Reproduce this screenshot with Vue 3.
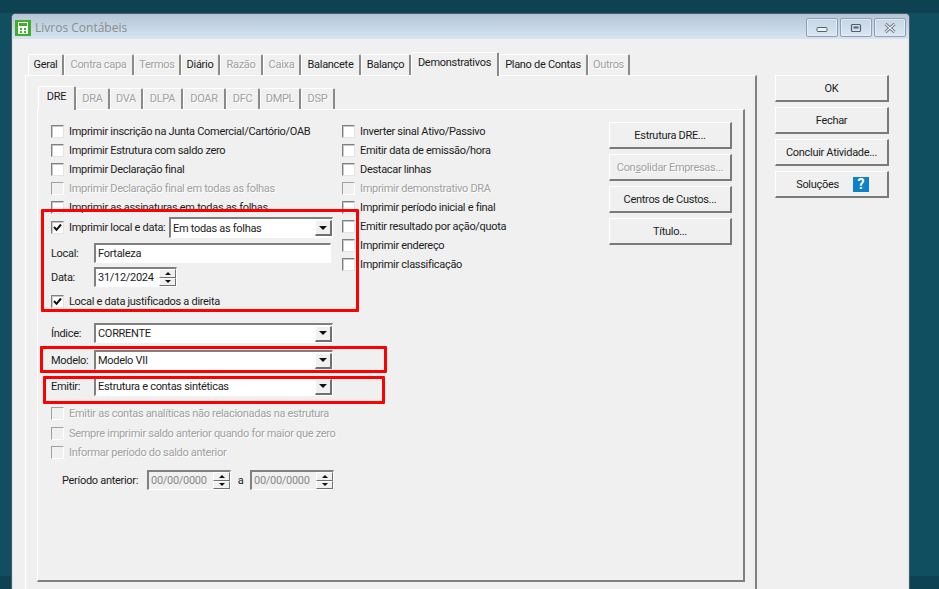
<script setup>
const outerTabs = [
  { t: 'Geral', w: 36 }, { t: 'Contra capa', w: 70, off: true }, { t: 'Termos', w: 47, off: true },
  { t: 'Diário', w: 39 }, { t: 'Razão', w: 43, off: true }, { t: 'Caixa', w: 38, off: true },
  { t: 'Balancete', w: 60 }, { t: 'Balanço', w: 50 }, { t: 'Demonstrativos', w: 88, on: true },
  { t: 'Plano de Contas', w: 89 }, { t: 'Outros', w: 42, off: true }
]
const innerTabs = [
  { t: 'DRE', w: 38, on: true }, { t: 'DRA', w: 34, off: true }, { t: 'DVA', w: 33, off: true },
  { t: 'DLPA', w: 40, off: true }, { t: 'DOAR', w: 43, off: true }, { t: 'DFC', w: 34, off: true },
  { t: 'DMPL', w: 41, off: true }, { t: 'DSP', w: 34, off: true }
]
const leftChecks = [
  { t: 'Imprimir inscrição na Junta Comercial/Cartório/OAB' },
  { t: 'Imprimir Estrutura com saldo zero' },
  { t: 'Imprimir Declaração final' },
  { t: 'Imprimir Declaração final em todas as folhas', off: true },
  { t: 'Imprimir as assinaturas em todas as folhas' }
]
const rightChecks = [
  { t: 'Inverter sinal Ativo/Passivo' },
  { t: 'Emitir data de emissão/hora' },
  { t: 'Destacar linhas' },
  { t: 'Imprimir demonstrativo DRA', off: true },
  { t: 'Imprimir período inicial e final' },
  { t: 'Emitir resultado por ação/quota' },
  { t: 'Imprimir endereço' },
  { t: 'Imprimir classificação' }
]
const bottomChecks = [
  'Emitir as contas analíticas não relacionadas na estrutura',
  'Sempre imprimir saldo anterior quando for maior que zero',
  'Informar período do saldo anterior'
]
</script>

<template>
  <div class="desk">
    <div class="win">
      <div class="titlebar">
        <svg class="appicon" width="16" height="16" viewBox="0 0 16 16">
          <rect width="16" height="16" fill="#3fae29" />
          <rect x="3" y="2" width="10" height="12" fill="#fff" />
          <rect x="4" y="3" width="8" height="3" fill="#3fae29" />
          <rect x="5" y="8" width="2" height="2" fill="#3fae29" />
          <rect x="9" y="8" width="2" height="2" fill="#3fae29" />
          <rect x="5" y="11" width="2" height="2" fill="#3fae29" />
          <rect x="9" y="11" width="2" height="2" fill="#3fae29" />
        </svg>
        <span class="title">Livros Contábeis</span>
        <div class="capbtns">
          <div class="capbtn">
            <svg width="12" height="8" viewBox="0 0 12 8"><rect x="1" y="3.5" width="10" height="4" rx="1" fill="#eef2f6" stroke="#56616c" /></svg>
          </div>
          <div class="capbtn">
            <svg width="12" height="10" viewBox="0 0 12 10"><rect x="1.5" y="1.5" width="9" height="7" rx="1" fill="none" stroke="#56616c" stroke-width="1.2" /><rect x="3.5" y="3.5" width="5" height="2" fill="#56616c" /></svg>
          </div>
          <div class="capbtn">
            <svg width="12" height="10" viewBox="0 0 12 10"><path d="M1.5 1 L10.5 9 M10.5 1 L1.5 9" stroke="#5a6570" stroke-width="3" fill="none" /><path d="M1.5 1 L10.5 9 M10.5 1 L1.5 9" stroke="#eef2f6" stroke-width="1.2" fill="none" /></svg>
          </div>
        </div>
      </div>

      <div class="client">
        <div class="main">
          <div class="tabs outer">
            <div v-for="tab in outerTabs" :key="tab.t" class="tab" :class="{ on: tab.on, off: tab.off }" :style="{ width: tab.w + 'px' }">{{ tab.t }}</div>
          </div>
          <div class="panel outerpanel">
            <div class="tabs inner">
              <div v-for="tab in innerTabs" :key="tab.t" class="tab" :class="{ on: tab.on, off: tab.off }" :style="{ width: tab.w + 'px' }">{{ tab.t }}</div>
            </div>
            <div class="panel innerpanel">
              <div class="form">
                <div class="col-left">
                  <div v-for="c in leftChecks" :key="c.t" class="check" :class="{ off: c.off }"><span class="box"></span>{{ c.t }}</div>
                  <div class="row local-combo">
                    <div class="check local-check"><span class="box"><svg width="9" height="9" viewBox="0 0 9 9"><path d="M1 4 L3.5 6.8 L8 1.5" fill="none" stroke="#111" stroke-width="2" /></svg></span>Imprimir local e data:</div>
                    <div class="combo combo-em"><span>Em todas as folhas</span><span class="arrow"><i></i></span></div>
                  </div>
                  <div class="row r-local"><label class="lbl">Local:</label><div class="input input-wide">Fortaleza</div></div>
                  <div class="row r-data"><label class="lbl">Data:</label>
                    <div class="input spin-date"><span>31/12/2024</span><span class="spin"><b><i class="up"></i></b><b><i class="down"></i></b></span></div>
                  </div>
                  <div class="check r-just"><span class="box"><svg width="9" height="9" viewBox="0 0 9 9"><path d="M1 4 L3.5 6.8 L8 1.5" fill="none" stroke="#111" stroke-width="2" /></svg></span>Local e data justificados a direita</div>
                  <div class="row r-indice"><label class="lbl">Índice:</label><div class="combo combo-wide"><span>CORRENTE</span><span class="arrow"><i></i></span></div></div>
                  <div class="row r-modelo"><label class="lbl">Modelo:</label><div class="combo combo-wide"><span>Modelo VII</span><span class="arrow"><i></i></span></div></div>
                  <div class="row r-emitir"><label class="lbl">Emitir:</label><div class="combo combo-wide"><span>Estrutura e contas sintéticas</span><span class="arrow"><i></i></span></div></div>
                  <div class="bottom-checks">
                    <div v-for="c in bottomChecks" :key="c" class="check off"><span class="box"></span>{{ c }}</div>
                  </div>
                  <div class="row r-periodo">
                    <label class="lbl-p">Período anterior:</label>
                    <div class="input spin-p"><span>00/00/0000</span><span class="spin"><b><i class="up"></i></b><b><i class="down"></i></b></span></div>
                    <span class="a">a</span>
                    <div class="input spin-p"><span>00/00/0000</span><span class="spin"><b><i class="up"></i></b><b><i class="down"></i></b></span></div>
                  </div>
                </div>
                <div class="col-right">
                  <div v-for="c in rightChecks" :key="c.t" class="check" :class="{ off: c.off }"><span class="box"></span>{{ c.t }}</div>
                </div>
                <div class="col-btns">
                  <div class="btn">Estrutura DRE...</div>
                  <div class="btn off"><span>Con<u>s</u>olidar Empresas...</span></div>
                  <div class="btn">Centros de Custos...</div>
                  <div class="btn">Título...</div>
                </div>
              </div>
            </div>
          </div>
        </div>
        <div class="side">
          <div class="btn">OK</div>
          <div class="btn">Fechar</div>
          <div class="btn">Concluir Atividade...</div>
          <div class="btn sol">Soluções
            <span class="help">?</span>
          </div>
        </div>
      </div>
    </div>
    <div class="mark m1"></div>
    <div class="mark m2"></div>
    <div class="mark m3"></div>
  </div>
</template>

<style>
html, body { margin: 0; padding: 0; background: #0f4f60; }
</style>

<style scoped>
.desk {
  position: relative;
  width: 939px;
  height: 589px;
  overflow: hidden;
  box-sizing: border-box;
  padding-top: 13px;
  background: linear-gradient(#0c4252 0, #0c4252 13px, #0f4f60 13px, #0f4f60 576px, #0c4252 576px);
  font-family: Roboto, "Liberation Sans", sans-serif;
  font-size: 11px;
  letter-spacing: -0.3px;
  color: #1c1c1c;
}
.win {
  width: 899px;
  height: 576px;
  margin-left: 11px;
  box-sizing: border-box;
  border: 1px solid #4f5a63;
  border-bottom: 0;
  border-radius: 5px 5px 0 0;
  background: #f0f0f0;
  box-shadow: inset 1px 0 0 #d6e2ee, inset -1px 0 0 #d6e2ee;
}
.titlebar {
  height: 25px;
  display: flex;
  align-items: center;
  padding: 0 3px 0 3px;
  background: linear-gradient(#b4c5d5, #d6e4f1);
  border-radius: 4px 4px 0 0;
}
.appicon { flex: none; margin-top: 2px; }
.title {
  margin-left: 4px;
  font-family: "Open Sans", sans-serif;
  font-size: 12px;
  letter-spacing: 0;
  color: #8c8c8c;
  margin-top: 2px;
}
.capbtns { margin-left: auto; display: flex; gap: 2px; margin-top: 2px; }
.capbtn {
  width: 30px;
  height: 17px;
  border: 1px solid #8fa0b6;
  border-radius: 2px;
  display: flex;
  align-items: center;
  justify-content: center;
  background: linear-gradient(#c6d5e4, #dae7f3);
  box-shadow: inset 0 0 0 1px #e2ebf4;
}
.client {
  display: flex;
  padding: 13px 0 0 13px;
  height: 537px;
  overflow: hidden;
  box-sizing: content-box;
}
.main { width: 732px; flex: none; }
.tabs { display: flex; align-items: flex-end; position: relative; z-index: 1; }
.outer { height: 23px; padding-left: 3px; }
.inner { height: 22px; padding-left: 1px; }
.tab {
  box-sizing: border-box;
  height: 21px;
  flex: none;
  text-align: center;
  line-height: 19px;
  background: #f0f0f0;
  border-top: 1px solid #fff;
  border-left: 1px solid #fff;
  border-right: 2px solid #8a8a8a;
  border-radius: 2px 2px 0 0;
  white-space: nowrap;
  overflow: hidden;
}
.tab.off { color: #a0a0a0; text-shadow: 1px 1px 0 #fff; }
.tab.on {
  height: 24px;
  line-height: 19px;
  margin-bottom: -1px;
  border-left: 1px solid #fff;
}
.panel {
  box-sizing: border-box;
  border-top: 1px solid #fff;
  border-left: 1px solid #fff;
  border-right: 2px solid #808080;
  border-bottom: 2px solid #808080;
  background: #f0f0f0;
}
.outerpanel { padding: 11px 10px 0 11px; height: 560px; }
.innerpanel { height: 473px; padding: 12px 0 0 13px; }
.form { display: flex; align-items: flex-start; }
.col-left { width: 292px; flex: none; margin-right: -1px; }
.col-right { width: 267px; flex: none; }
.col-btns { flex: none; display: flex; flex-direction: column; gap: 5px; width: 123px; }
.check {
  display: flex;
  align-items: center;
  height: 19px;
  white-space: nowrap;
}
.check.off { color: #a0a0a0; text-shadow: 1px 1px 0 #fff; }
.local-check { width: 118px; flex: none; }
.box {
  flex: none;
  box-sizing: border-box;
  width: 13px;
  height: 13px;
  margin-right: 5px;
  display: flex;
  align-items: center;
  justify-content: center;
  background: #fff;
  border-top: 1px solid #808080;
  border-left: 1px solid #808080;
  border-right: 1px solid #e4e4e4;
  border-bottom: 1px solid #e4e4e4;
  box-shadow: inset 1px 1px 0 #c8c8c8;
}
.check.off .box { background: #f0f0f0; border-color: #a0a0a0 #fff #fff #a0a0a0; box-shadow: none; }
.row { display: flex; align-items: center; white-space: nowrap; }
.local-combo { height: 21px; }
.combo, .input {
  box-sizing: border-box;
  background: #fff;
  border-top: 2px solid #808080;
  border-left: 2px solid #808080;
  border-right: 1px solid #fff;
  border-bottom: 1px solid #fff;
  display: flex;
  align-items: center;
  white-space: nowrap;
  padding-left: 2px;
}
.combo-em { width: 164px; height: 21px; }
.combo-wide { width: 239px; height: 20px; }
.combo .arrow {
  margin-left: auto;
  flex: none;
  width: 17px;
  height: 16px;
  box-sizing: border-box;
  background: #f0f0f0;
  border-top: 1px solid #fff;
  border-left: 1px solid #fff;
  border-right: 2px solid #707070;
  border-bottom: 2px solid #707070;
  display: flex;
  align-items: center;
  justify-content: center;
}
.arrow i {
  width: 0; height: 0;
  border-left: 4px solid transparent;
  border-right: 4px solid transparent;
  border-top: 4px solid #111;
}
.lbl { width: 43px; flex: none; }
.r-local { margin-top: 5px; }
.input-wide { width: 237px; height: 20px; }
.r-data { margin-top: 4px; }
.spin-date { width: 83px; height: 20px; }
.spin-p {
  width: 84px;
  height: 20px;
  background: #f0f0f0;
  color: #8a8a8a;
}
.spin {
  margin-left: auto;
  flex: none;
  display: flex;
  flex-direction: column;
  width: 17px;
  height: 17px;
}
.spin b {
  flex: 1;
  display: flex;
  align-items: center;
  justify-content: center;
  background: #f0f0f0;
  border-top: 1px solid #fff;
  border-left: 1px solid #fff;
  border-right: 1px solid #707070;
  border-bottom: 1px solid #707070;
}
.spin .up, .spin .down { width: 0; height: 0; border-left: 3px solid transparent; border-right: 3px solid transparent; }
.spin .up { border-bottom: 3px solid #111; }
.spin .down { border-top: 3px solid #111; }
.r-just { margin-top: 5px; }
.r-indice { margin-top: 12px; }
.r-modelo { margin-top: 7px; }
.r-emitir { margin-top: 6px; }
.bottom-checks { margin-top: 8px; display: flex; flex-direction: column; }
.bottom-checks .check + .check { margin-top: 0.5px; }
.r-periodo { margin-top: 8px; padding-left: 11px; }
.lbl-p { width: 85px; flex: none; }
.a { width: 19px; text-align: center; }
.btn {
  box-sizing: border-box;
  height: 27px;
  display: flex;
  align-items: center;
  justify-content: center;
  background: #f0f0f0;
  border-top: 1px solid #fff;
  border-left: 1px solid #fff;
  border-right: 2px solid #7a7a7a;
  border-bottom: 2px solid #7a7a7a;
  white-space: nowrap;
}
.btn.off { color: #a0a0a0; text-shadow: 1px 1px 0 #fff; }
.side {
  margin-left: 18px;
  width: 114px;
  flex: none;
  display: flex;
  flex-direction: column;
  gap: 5px;
  padding-top: 23px;
}
.sol { gap: 14px; padding-left: 2px; }
.help {
  width: 16px;
  height: 15px;
  background: #0d82c8;
  color: #fff;
  font-weight: 700;
  font-size: 14px;
  line-height: 15px;
  text-align: center;
}
.mark {
  position: absolute;
  box-sizing: border-box;
  border: 3px solid #f00;
  border-radius: 1px;
  pointer-events: none;
}
.m1 { left: 41px; top: 209px; width: 318px; height: 103px; }
.m2 { left: 40px; top: 346px; width: 347px; height: 27px; }
.m3 { left: 43px; top: 376px; width: 342px; height: 28px; }
</style>
